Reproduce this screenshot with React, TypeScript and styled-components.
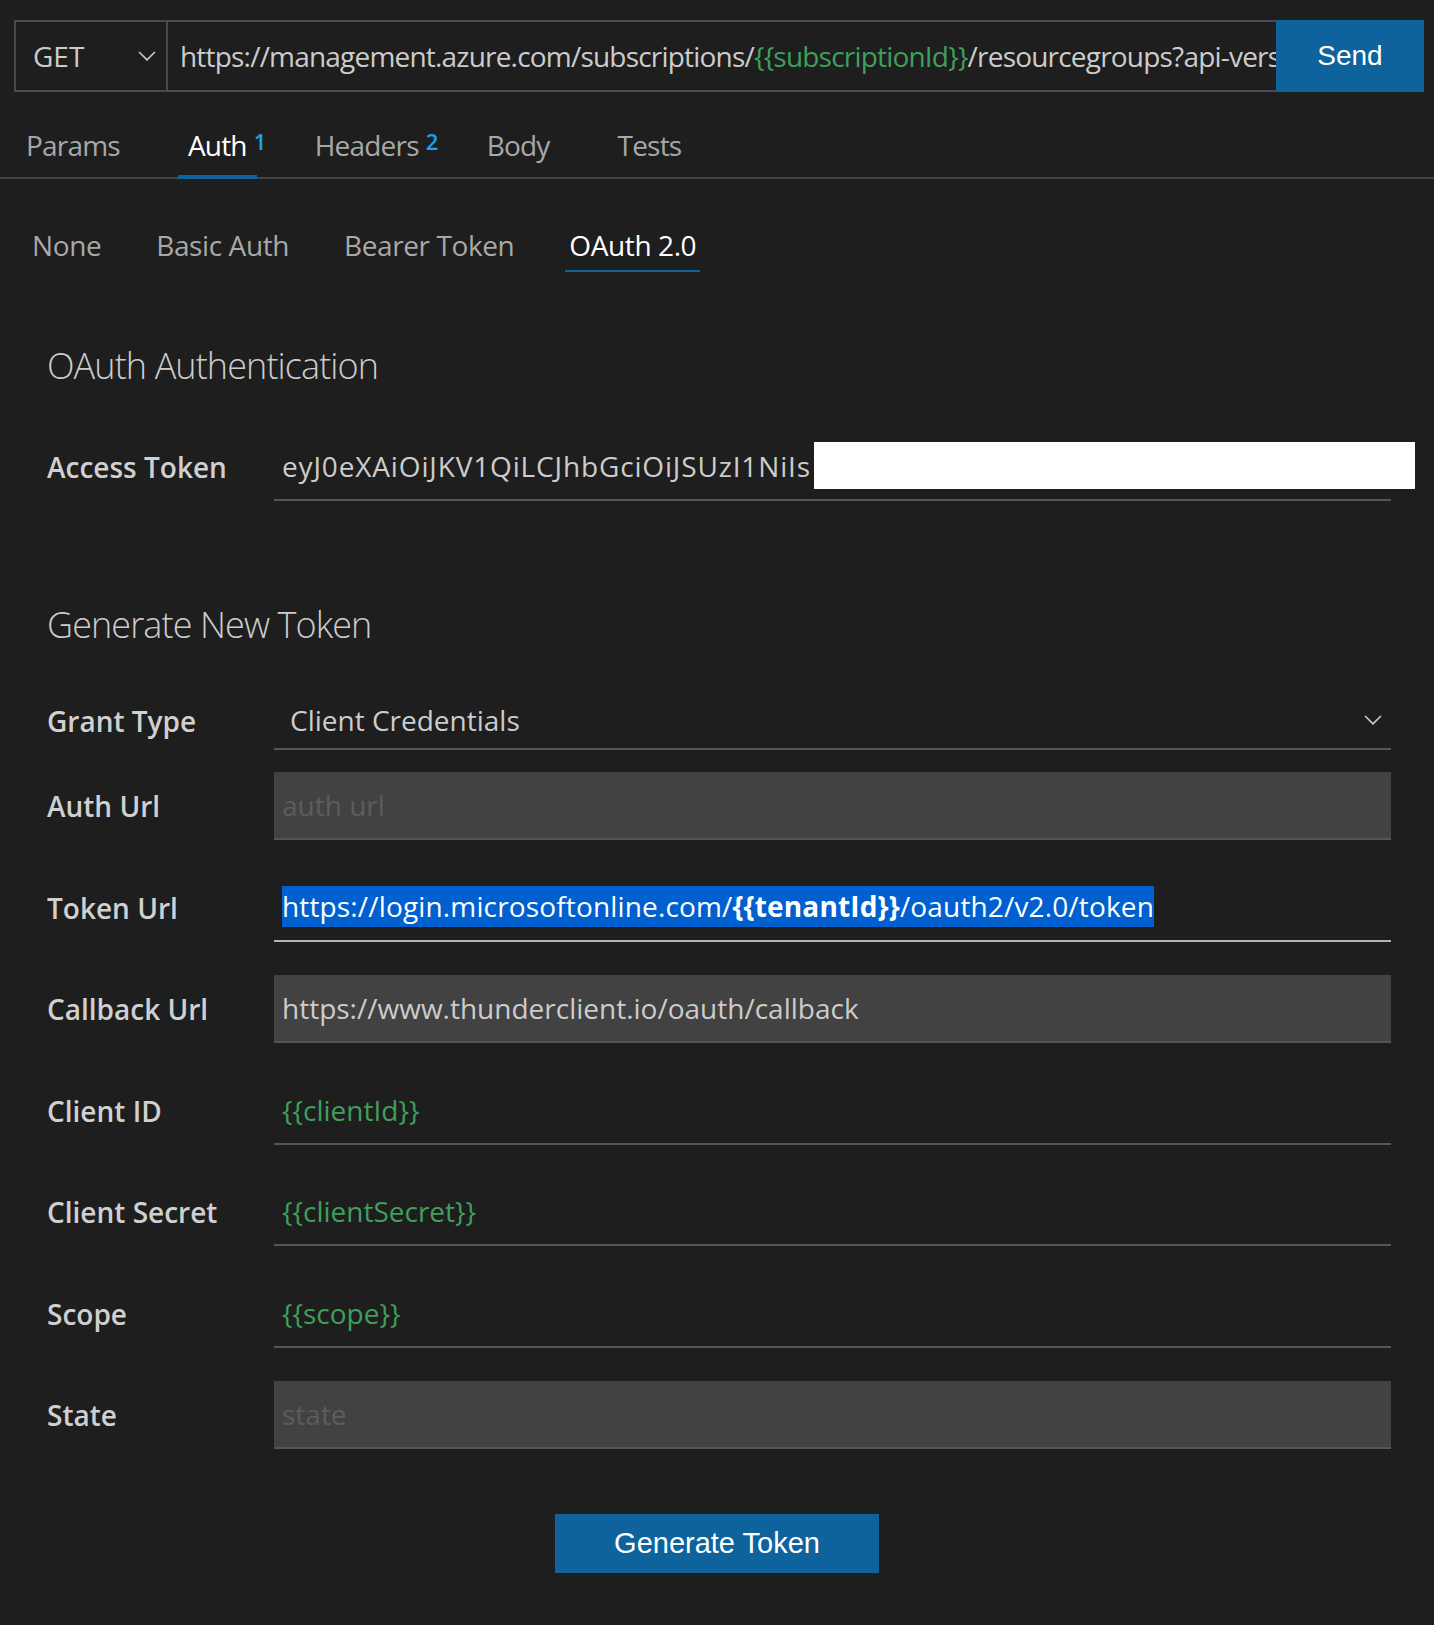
import styled, { createGlobalStyle } from 'styled-components';

const GlobalStyle = createGlobalStyle`
  body {
    margin: 0;
    background: #1e1e1e;
    font-family: "Open Sans", "Noto Sans", sans-serif;
  }
`;

const mainTabs = [
  { name: 'Params' },
  { name: 'Auth', badge: '1', active: true },
  { name: 'Headers', badge: '2' },
  { name: 'Body' },
  { name: 'Tests' },
];

const authTypes = ['None', 'Basic Auth', 'Bearer Token', 'OAuth 2.0'];

function Chevron({ size = 18 }: { size?: number }) {
  return (
    <svg width={size} height={size * 0.55} viewBox="0 0 18 10" fill="none">
      <path d="M1 1l8 8 8-8" stroke="#cccccc" strokeWidth="1.6" />
    </svg>
  );
}

function App() {
  return (
    <Page>
      <GlobalStyle />
      <RequestBar>
        <MethodSelect>
          GET
          <Chevron />
        </MethodSelect>
        <UrlBox>
          https://management.azure.com/subscriptions/<Var>{'{{subscriptionId}}'}</Var>
          /resourcegroups?api-version=2020-01-01
        </UrlBox>
        <SendButton>Send</SendButton>
      </RequestBar>

      <TabBar>
        {mainTabs.map(t => (
          <Tab key={t.name} $active={!!t.active}>
            {t.name}
            {t.badge && <Badge>{t.badge}</Badge>}
          </Tab>
        ))}
      </TabBar>

      <AuthTypes>
        {authTypes.map(a => (
          <AuthType key={a} $active={a === 'OAuth 2.0'}>{a}</AuthType>
        ))}
      </AuthTypes>

      <Form>
        <SectionTitle $top={69}>OAuth Authentication</SectionTitle>
        <Row $top={42}>
          <Label>Access Token</Label>
          <Field $visible>
            <TokenText>eyJ0eXAiOiJKV1QiLCJhbGciOiJSUzI1NiIs</TokenText>
            <Redacted />
          </Field>
        </Row>

        <SectionTitle $top={99}>Generate New Token</SectionTitle>
        <Row $top={42}>
          <Label>Grant Type</Label>
          <SelectField>
            Client Credentials
            <Chevron />
          </SelectField>
        </Row>
        <Row $top={22}>
          <Label>Auth Url</Label>
          <Field $filled>
            <Placeholder>auth url</Placeholder>
          </Field>
        </Row>
        <Row>
          <Label>Token Url</Label>
          <Field $focused>
            <Selection>
              https://login.microsoftonline.com/<strong>{'{{tenantId}}'}</strong>/oauth2/v2.0/token
            </Selection>
          </Field>
        </Row>
        <Row>
          <Label>Callback Url</Label>
          <Field $filled>https://www.thunderclient.io/oauth/callback</Field>
        </Row>
        <Row>
          <Label>Client ID</Label>
          <Field>
            <Var>{'{{clientId}}'}</Var>
          </Field>
        </Row>
        <Row>
          <Label>Client Secret</Label>
          <Field>
            <Var>{'{{clientSecret}}'}</Var>
          </Field>
        </Row>
        <Row>
          <Label>Scope</Label>
          <Field>
            <Var>{'{{scope}}'}</Var>
          </Field>
        </Row>
        <Row>
          <Label>State</Label>
          <Field $filled>
            <Placeholder>state</Placeholder>
          </Field>
        </Row>
      </Form>

      <Actions>
        <GenerateButton>Generate Token</GenerateButton>
      </Actions>
    </Page>
  );
}

const Page = styled.div`
  width: 1434px;
  min-height: 1625px;
  background: #1e1e1e;
  color: #cccccc;
  font-size: 28px;
  padding-top: 20px;
  box-sizing: border-box;
`;

const RequestBar = styled.div`
  display: flex;
  height: 72px;
  margin: 0 10px 0 14px;
`;

const MethodSelect = styled.div`
  width: 154px;
  box-sizing: border-box;
  border: 2px solid #4b4b4b;
  display: flex;
  align-items: center;
  justify-content: space-between;
  padding: 0 10px 0 17px;
  color: #cccccc;
`;

const UrlBox = styled.div`
  flex: 1;
  min-width: 0;
  box-sizing: border-box;
  border-top: 2px solid #4b4b4b;
  border-bottom: 2px solid #4b4b4b;
  display: flex;
  align-items: center;
  padding-left: 12px;
  white-space: pre;
  overflow: hidden;
  letter-spacing: -0.8px;
  color: #cccccc;
`;

const Var = styled.span`
  color: #3f9f5c;
`;

const SendButton = styled.button`
  width: 148px;
  flex-shrink: 0;
  border: none;
  background: #0e639c;
  color: #ffffff;
  font-family: "Liberation Sans", Arial, sans-serif;
  font-size: 28px;
  cursor: pointer;
`;

const TabBar = styled.div`
  display: flex;
  gap: 48px;
  padding: 33px 0 0 16px;
  border-bottom: 2px solid #444444;
`;

const Tab = styled.div<{ $active: boolean }>`
  position: relative;
  line-height: 40px;
  padding: 0 10px 10px;
  letter-spacing: -0.8px;
  border-bottom: 4px solid ${p => (p.$active ? '#0e639c' : 'transparent')};
  color: ${p => (p.$active ? '#ffffff' : '#a8a8a8')};
  margin-bottom: -2px;
`;

const Badge = styled.span`
  position: absolute;
  left: calc(100% - 3px);
  top: 5px;
  color: #1ba1f0;
  font-size: 22px;
  font-weight: 600;
  line-height: 22px;
  letter-spacing: 0;
`;

const AuthTypes = styled.div`
  display: flex;
  gap: 47px;
  padding: 46px 0 0 28px;
`;

const AuthType = styled.div<{ $active: boolean }>`
  line-height: 40px;
  padding: 0 4px 5px;
  letter-spacing: -0.4px;
  border-bottom: 2px solid ${p => (p.$active ? '#0e639c' : 'transparent')};
  color: ${p => (p.$active ? '#ffffff' : '#a8a8a8')};
`;

const Form = styled.div`
  padding: 0 43px 0 47px;
`;

const SectionTitle = styled.div<{ $top: number }>`
  margin-top: ${p => p.$top}px;
  font-size: 36px;
  font-weight: 300;
  line-height: 50px;
  letter-spacing: -0.9px;
  color: #cccccc;
`;

const Row = styled.div<{ $top?: number }>`
  display: grid;
  grid-template-columns: 227px 1fr;
  align-items: center;
  margin-top: ${p => p.$top ?? 33.5}px;
`;

const Label = styled.div`
  font-weight: 600;
  color: #d0d0d0;
`;

const Field = styled.div<{ $filled?: boolean; $focused?: boolean; $visible?: boolean }>`
  position: relative;
  height: 68px;
  box-sizing: border-box;
  display: flex;
  align-items: center;
  padding: 0 8px;
  white-space: pre;
  overflow: ${p => (p.$visible ? 'visible' : 'hidden')};
  background: ${p => (p.$filled ? '#424242' : 'transparent')};
  border-bottom: 2px solid ${p => (p.$focused ? '#b4b4b4' : '#555555')};
  color: #cccccc;
`;

const TokenText = styled.span`
  letter-spacing: 0.85px;
`;

const SelectField = styled.div`
  height: 58px;
  box-sizing: border-box;
  display: flex;
  align-items: center;
  justify-content: space-between;
  padding: 0 9px 0 16px;
  border-bottom: 2px solid #555555;
  color: #cccccc;
`;

const Placeholder = styled.span`
  color: #5c5c5c;
`;

const Selection = styled.span`
  display: inline-block;
  line-height: 41px;
  letter-spacing: 0.15px;
  background: #0060cf;
  color: #ffffff;
`;

const Redacted = styled.div`
  position: absolute;
  left: 540px;
  top: 9px;
  width: 601px;
  height: 47px;
  background: #ffffff;
`;

const Actions = styled.div`
  display: flex;
  justify-content: center;
  margin-top: 65px;
  padding-bottom: 50px;
`;

const GenerateButton = styled.button`
  width: 324px;
  height: 59px;
  border: none;
  background: #0e639c;
  color: #ffffff;
  font-family: "Liberation Sans", Arial, sans-serif;
  font-size: 29px;
  cursor: pointer;
`;

export default App;
